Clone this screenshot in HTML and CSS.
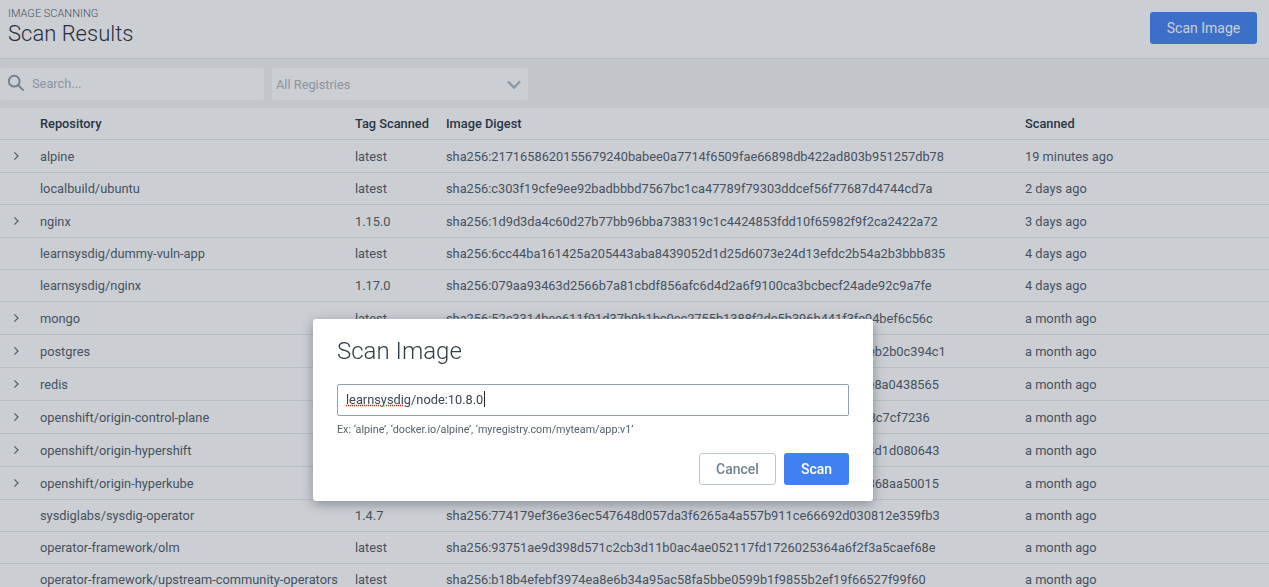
FILE: index.html
```html
<!DOCTYPE html>
<html lang="en">
<head>
  <meta charset="UTF-8">
  <title>Scan Results</title>
  <link rel="stylesheet" href="styles.css">
</head>
<body>

  <header class="page-header">
    <div>
      <div class="eyebrow">IMAGE SCANNING</div>
      <h1>Scan Results</h1>
    </div>
    <button class="btn btn-primary btn-wide">Scan Image</button>
  </header>

  <div class="filters">
    <div class="search-box">
      <svg class="search-icon" width="18" height="18" viewBox="0 0 20 20" fill="none" stroke="#8b99a6" stroke-width="2.2">
        <circle cx="8" cy="8" r="6"/>
        <path d="M12.5 12.5 L18.5 18.5"/>
      </svg>
      <span>Search...</span>
    </div>
    <div class="select-box">
      <span>All Registries</span>
      <svg width="14" height="9" viewBox="0 0 14 9" fill="none" stroke="#a9b6c2" stroke-width="2.4">
        <path d="M1 1.5 L7 7.5 L13 1.5"/>
      </svg>
    </div>
  </div>

  <table class="results">
    <colgroup>
      <col class="col-toggle">
      <col class="col-repo">
      <col class="col-tag">
      <col class="col-digest">
      <col>
    </colgroup>
    <thead>
      <tr>
        <th></th>
        <th>Repository</th>
        <th>Tag Scanned</th>
        <th>Image Digest</th>
        <th>Scanned</th>
      </tr>
    </thead>
    <tbody id="rows"></tbody>
  </table>

  <div class="overlay">
    <div class="modal">
      <h2>Scan Image</h2>
      <div class="text-input"><span class="misspelled">learnsysdig</span>/node:10.8.0<span class="caret"></span></div>
      <p class="hint">Ex: ‘alpine’, ‘docker.io/alpine’, ‘myregistry.com/myteam/app:v1’</p>
      <div class="modal-actions">
        <button class="btn btn-outline">Cancel</button>
        <button class="btn btn-primary btn-small">Scan</button>
      </div>
    </div>
  </div>

  <script>
    const images = [
      { repo: "alpine", tag: "latest", digest: "2171658620155679240babee0a7714f6509fae66898db422ad803b951257db78", when: "19 minutes ago", more: true },
      { repo: "localbuild/ubuntu", tag: "latest", digest: "c303f19cfe9ee92badbbbd7567bc1ca47789f79303ddcef56f77687d4744cd7a", when: "2 days ago" },
      { repo: "nginx", tag: "1.15.0", digest: "1d9d3da4c60d27b77bb96bba738319c1c4424853fdd10f65982f9f2ca2422a72", when: "3 days ago", more: true },
      { repo: "learnsysdig/dummy-vuln-app", tag: "latest", digest: "6cc44ba161425a205443aba8439052d1d25d6073e24d13efdc2b54a2b3bbb835", when: "4 days ago" },
      { repo: "learnsysdig/nginx", tag: "1.17.0", digest: "079aa93463d2566b7a81cbdf856afc6d4d2a6f9100ca3bcbecf24ade92c9a7fe", when: "4 days ago" },
      { repo: "mongo", tag: "latest", digest: "52c3314bee611f91d37b9b1bc0cc2755b1388f2de5b396b441f3fe94bef6c56c", when: "a month ago", more: true },
      { repo: "postgres", tag: "latest", digest: "884c1a6d02be7935ac10d4e687b2819c3d5ea7806c41b8d27e93aeb2b0c394c1", when: "a month ago", more: true },
      { repo: "redis", tag: "latest", digest: "3ab97e10c46d58f2b7a193ce06d4f8215c7be09a3d16f472cb85d1e8a0438565", when: "a month ago", more: true },
      { repo: "openshift/origin-control-plane", tag: "latest", digest: "5d20cff1a47e36b9d0c7e25f1fab3649f07dc1e52b96a8384e13c7a8c7cf7236", when: "a month ago", more: true },
      { repo: "openshift/origin-hypershift", tag: "latest", digest: "e17a04c9d35b82f6a10e7cd4936bf258c04ed71a9f2356b08c74a24d1d080643", when: "a month ago", more: true },
      { repo: "openshift/origin-hyperkube", tag: "latest", digest: "92bd46e07f1c35a8d6102be97fc4a3d8150e6b27dc93f4a178c8b3868aa50015", when: "a month ago", more: true },
      { repo: "sysdiglabs/sysdig-operator", tag: "1.4.7", digest: "774179ef36e36ec547648d057da3f6265a4a557b911ce66692d030812e359fb3", when: "a month ago" },
      { repo: "operator-framework/olm", tag: "latest", digest: "93751ae9d398d571c2cb3d11b0ac4ae052117fd1726025364a6f2f3a5caef68e", when: "a month ago" },
      { repo: "operator-framework/upstream-community-operators", tag: "latest", digest: "b18b4efebf3974ea8e6b34a95ac58fa5bbe0599b1f9855b2ef19f66527f99f60", when: "a month ago" },
    ];

    const chevron = '<svg width="7" height="10" viewBox="0 0 7 10" fill="none" stroke="#5a6773" stroke-width="1.2"><path d="M1.4 1.4 L5 5 L1.4 8.6"/></svg>';
    const rows = document.getElementById("rows");

    images.forEach(img => {
      const tr = document.createElement("tr");
      if (img.more) tr.classList.add("expandable");
      tr.innerHTML = `
        <td class="toggle">${img.more ? chevron : ""}</td>
        <td>${img.repo}</td>
        <td>${img.tag}</td>
        <td>sha256:${img.digest}</td>
        <td>${img.when}</td>
      `;
      rows.appendChild(tr);
    });
  </script>

</body>
</html>
```

FILE: styles.css
```css
body {
  margin: 0;
  height: 587px;
  overflow: hidden;
  background-color: #fff;
  font-family: Roboto, "Liberation Sans", sans-serif;
  font-size: 12.8px;
  color: #4d5966;
}
.page-header {
  display: flex;
  justify-content: space-between;
  align-items: flex-start;
  height: 59px;
  padding: 8px 12px 0 8px;
  box-sizing: border-box;
  border-bottom: 1px solid #e6e8eb;
}
.eyebrow {
  font-size: 11px;
  font-weight: 300;
  line-height: 11px;
  color: #4d5864;
}
h1 {
  margin: 2px 0 0;
  font-size: 22px;
  font-weight: 300;
  line-height: 26px;
  color: #1f2a36;
}
.btn {
  border-radius: 3px;
  font-family: inherit;
  font-size: 14px;
  height: 32px;
  padding: 0;
}
.btn-primary {
  border: none;
  background-color: #4080f1;
  color: #fff;
}
.btn-wide {
  width: 107px;
  margin-top: 4px;
}
.btn-small {
  width: 65px;
  font-weight: 500;
}
.btn-outline {
  width: 77px;
  border: 1px solid #b9c7d3;
  background-color: #fff;
  color: #70838f;
  font-weight: 500;
}
.filters {
  display: flex;
  gap: 8px;
  height: 49px;
  padding-top: 9px;
  box-sizing: border-box;
  background-color: #f3f4f4;
}
.search-box,
.select-box {
  display: flex;
  align-items: center;
  height: 32px;
  background-color: #fff;
  border-radius: 2px;
  color: #a9b2bb;
  font-size: 12.8px;
}
.search-box {
  width: 264px;
  gap: 7px;
  padding: 0 0 2px 7px;
  box-sizing: border-box;
}
.select-box {
  width: 256px;
  justify-content: space-between;
  padding: 0 7px 0 4px;
  box-sizing: border-box;
}
.search-icon {
  flex: none;
}
.results {
  border-collapse: collapse;
  table-layout: fixed;
  width: 100%;
}
.col-toggle { width: 40px; }
.col-repo { width: 315px; }
.col-tag { width: 91px; }
.col-digest { width: 579px; }
.results th {
  height: 31px;
  padding: 0;
  text-align: left;
  font-size: 12.8px;
  font-weight: 500;
  color: #26333f;
  border-bottom: 1px solid #e4e7ea;
}
.results td {
  height: 31px;
  padding: 0;
  white-space: nowrap;
  overflow: hidden;
  border-bottom: 1px solid #e4e7ea;
}
.results tr.expandable td {
  height: 32px;
}
.results td.toggle {
  padding-left: 13px;
  line-height: 0;
}
.overlay {
  position: fixed;
  top: 0;
  left: 0;
  right: 0;
  bottom: 0;
  display: flex;
  justify-content: center;
  padding: 319px 83px 0 0;
  box-sizing: border-box;
  background-color: rgba(47, 59, 79, 0.25);
}
.modal {
  width: 560px;
  height: 182px;
  padding: 17px 24px 0;
  box-sizing: border-box;
  background-color: #fff;
  border-radius: 3px;
  box-shadow: 0 3px 12px rgba(30, 40, 55, 0.4);
}
h2 {
  margin: 0;
  font-size: 24px;
  font-weight: 300;
  line-height: 30px;
  color: #333d47;
}
.text-input {
  display: flex;
  align-items: center;
  height: 28px;
  margin-top: 18px;
  padding: 0 0 2px 8px;
  border: 1px solid #8da3b2;
  border-radius: 2px;
  font-size: 12.8px;
  color: #3a4550;
}
.misspelled {
  text-decoration: underline dotted #e8201c;
}
.caret {
  width: 1px;
  height: 16px;
  margin-left: 1px;
  background-color: #222;
}
.hint {
  margin: 7px 0 0;
  font-size: 10.75px;
  line-height: 14px;
  color: #55616c;
}
.modal-actions {
  display: flex;
  justify-content: flex-end;
  gap: 8px;
  margin-top: 16px;
}
```
